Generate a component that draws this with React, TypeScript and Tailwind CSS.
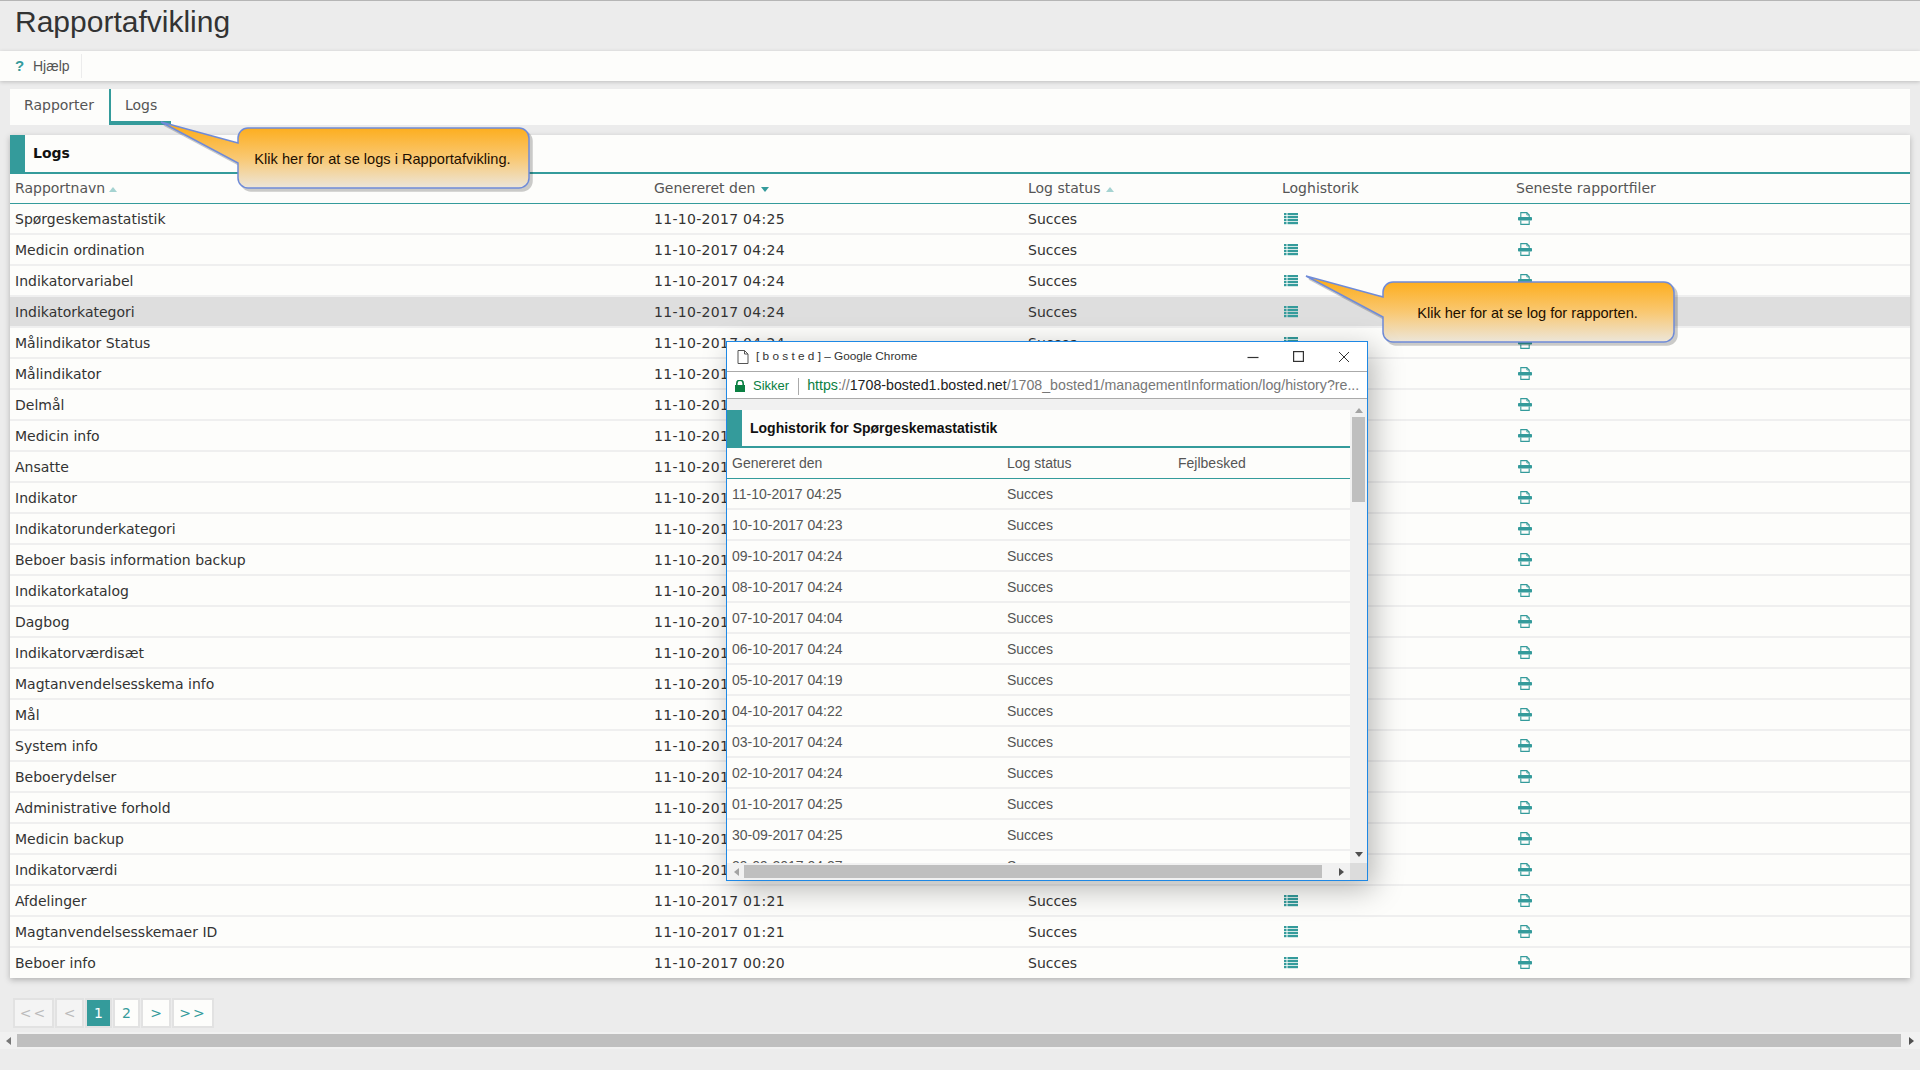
import React from 'react';

const reports: [string, string][] = [
  ['Spørgeskemastatistik', '11-10-2017 04:25'],
  ['Medicin ordination', '11-10-2017 04:24'],
  ['Indikatorvariabel', '11-10-2017 04:24'],
  ['Indikatorkategori', '11-10-2017 04:24'],
  ['Målindikator Status', '11-10-2017 04:24'],
  ['Målindikator', '11-10-2017 04:24'],
  ['Delmål', '11-10-2017 04:24'],
  ['Medicin info', '11-10-2017 04:24'],
  ['Ansatte', '11-10-2017 04:24'],
  ['Indikator', '11-10-2017 04:24'],
  ['Indikatorunderkategori', '11-10-2017 04:24'],
  ['Beboer basis information backup', '11-10-2017 04:24'],
  ['Indikatorkatalog', '11-10-2017 04:24'],
  ['Dagbog', '11-10-2017 04:24'],
  ['Indikatorværdisæt', '11-10-2017 04:24'],
  ['Magtanvendelsesskema info', '11-10-2017 04:24'],
  ['Mål', '11-10-2017 04:24'],
  ['System info', '11-10-2017 04:24'],
  ['Beboerydelser', '11-10-2017 04:24'],
  ['Administrative forhold', '11-10-2017 04:24'],
  ['Medicin backup', '11-10-2017 04:24'],
  ['Indikatorværdi', '11-10-2017 04:24'],
  ['Afdelinger', '11-10-2017 01:21'],
  ['Magtanvendelsesskemaer ID', '11-10-2017 01:21'],
  ['Beboer info', '11-10-2017 00:20'],
];

const history = [
  '11-10-2017 04:25',
  '10-10-2017 04:23',
  '09-10-2017 04:24',
  '08-10-2017 04:24',
  '07-10-2017 04:04',
  '06-10-2017 04:24',
  '05-10-2017 04:19',
  '04-10-2017 04:22',
  '03-10-2017 04:24',
  '02-10-2017 04:24',
  '01-10-2017 04:25',
  '30-09-2017 04:25',
  '29-09-2017 04:27',
];

const ListIcon = () => (
  <svg width="14" height="12" viewBox="0 0 14 12" fill="#349b9b" className="ml-[2px]">
    {[0, 3, 6, 9].map((y) => (
      <g key={y}>
        <rect x="0" y={y} width="2.5" height="2.2" />
        <rect x="3.5" y={y} width="10.5" height="2.2" />
      </g>
    ))}
  </svg>
);

const PrintIcon = () => (
  <svg width="14" height="13" viewBox="0 0 14 13" fill="none" stroke="#349b9b" strokeWidth="1.1" className="ml-[2px] -mt-[1px]">
    <path d="M2.8 5V0.6H8.8L11.2 3V5" />
    <path d="M8.8 0.6V3H11.2" strokeWidth="0.8" />
    <rect x="0" y="5" width="14" height="3.6" rx="0.8" fill="#349b9b" stroke="none" />
    <path d="M2.8 8.6V12.4H11.2V8.6" />
  </svg>
);

const SortArrow = ({ down, light, className }: { down?: boolean; light?: boolean; className: string }) => (
  <svg width="8" height="5" viewBox="0 0 8 5" className={`inline-block ${className}`} fill={light ? '#a5d3d1' : '#349b9b'}>
    <path d={down ? 'M0 0H8L4 5Z' : 'M0 5H8L4 0Z'} />
  </svg>
);

const Callout = ({ id, text, className }: { id: string; text: string; className: string }) => (
  <div className={`absolute w-[380px] h-[76px] ${className}`}>
    <svg width="380" height="76" viewBox="0 0 380 76" className="drop-shadow-[3px_3px_0_rgba(0,0,0,0.2)]">
      <defs>
        <linearGradient id={id} x1="0" y1="10" x2="0" y2="70" gradientUnits="userSpaceOnUse">
          <stop offset="0" stopColor="#fdae1f" />
          <stop offset="0.5" stopColor="#f9c872" />
          <stop offset="1" stopColor="#ece6da" />
        </linearGradient>
      </defs>
      <path
        d="M6 4L83 25V20a10 10 0 0 1 10-10H364a10 10 0 0 1 10 10V60a10 10 0 0 1-10 10H93a10 10 0 0 1-10-10V45Z"
        fill={`url(#${id})`}
        stroke="#6f8bd8"
        strokeWidth="1.5"
      />
    </svg>
    <div className="absolute left-[83px] top-[10px] w-[290px] h-[60px] flex items-center justify-center pt-[4px] pr-[1px] font-['Liberation_Sans',sans-serif] text-[14.6px] text-[#1d0f00]">
      {text}
    </div>
  </div>
);

const PopupWindow = () => (
  <div className="absolute left-[726px] top-[341px] w-[642px] h-[540px] flex flex-col bg-[#f1f1f1] border border-[#1e88e5] shadow-[6px_8px_28px_rgba(0,0,0,0.28)] font-['Liberation_Sans',sans-serif] text-[14px] text-[#555]">
    {/* chrome title bar */}
    <div className="h-[30px] shrink-0 flex items-center bg-white border-b border-[#aaa] pl-[10px] pr-[17px]">
      <svg width="12" height="14" viewBox="0 0 12 14" fill="none" stroke="#555" strokeWidth="1">
        <path d="M1 0.5H7.5L11 4V13.5H1ZM7.5 0.5V4H11" />
      </svg>
      <span className="ml-[7px] text-[11.8px] text-[#333]">[ b o s t e d ] – Google Chrome</span>
      <div className="ml-auto flex items-center gap-[34px]">
        <svg width="12" height="12" viewBox="0 0 12 12" stroke="#333" strokeWidth="1.2"><path d="M0.5 6.5H11.5" /></svg>
        <svg width="11" height="11" viewBox="0 0 11 11" fill="none" stroke="#333" strokeWidth="1.2"><rect x="0.6" y="0.6" width="9.8" height="9.8" /></svg>
        <svg width="12" height="12" viewBox="0 0 12 12" stroke="#333" strokeWidth="1"><path d="M1 1L11 11M11 1L1 11" /></svg>
      </div>
    </div>
    {/* address bar */}
    <div className="h-[27px] shrink-0 flex items-center bg-white border-b border-[#aaa] pl-[8px] pt-[2px] text-[14.2px] whitespace-nowrap overflow-hidden">
      <svg width="10" height="12" viewBox="0 0 10 12" fill="#0b8043">
        <path d="M1 5V3.5a4 4 0 0 1 8 0V5h1v7H0V5ZM2.6 5h4.8V3.5a2.4 2.4 0 0 0-4.8 0Z" />
      </svg>
      <span className="ml-[8px] text-[13px] text-[#0b8043]">Sikker</span>
      <span className="ml-[9px] w-px h-[17px] bg-[#aaa]" />
      <span className="ml-[8px] text-[#777]">
        <span className="text-[#0b8043]">https</span>://<span className="text-[#222]">1708-bosted1.bosted.net</span>/1708_bosted1/managementInformation/log/history?re...
      </span>
    </div>
    <div className="flex-1 min-h-0 flex flex-col">
      <div className="flex-1 min-h-0 flex">
        <div className="flex-1 min-w-0 overflow-hidden pt-[11px]">
          <div className="h-[36px] flex items-stretch bg-[#fdfdfb]">
            <div className="w-[15px] bg-[#349b9b]" />
            <div className="pl-[8px] flex items-center font-bold text-[14px] text-[#111]">
              Loghistorik for Spørgeskemastatistik
            </div>
          </div>
          <div className="h-[2px] bg-[#349b9b]" />
          <div className="bg-[#fdfdfb]">
            <div className="h-[31px] flex items-center border-b border-[#349b9b]">
              <div className="w-[280px] pl-[5px]">Genereret den</div>
              <div className="w-[171px]">Log status</div>
              <div>Fejlbesked</div>
            </div>
            {history.map((d) => (
              <div key={d} className="h-[31px] pt-[2px] flex items-center border-b-2 border-[#efefef]">
                <div className="w-[280px] pl-[5px]">{d}</div>
                <div className="w-[171px]">Succes</div>
              </div>
            ))}
          </div>
        </div>
        {/* vertical scrollbar */}
        <div className="w-[17px] shrink-0 bg-[#f1f1f1] flex flex-col items-center justify-between pt-[9px] pb-[6px]">
          <div className="w-full flex flex-col items-center">
            <svg width="8" height="5" viewBox="0 0 8 5" fill="#a3a3a3"><path d="M0 5H8L4 0Z" /></svg>
            <div className="mt-[4px] w-[13px] h-[85px] bg-[#bfbfbf]" />
          </div>
          <svg width="8" height="5" viewBox="0 0 8 5" fill="#505050"><path d="M0 0H8L4 5Z" /></svg>
        </div>
      </div>
      {/* horizontal scrollbar */}
      <div className="h-[17px] shrink-0 flex">
        <div className="flex-1 flex items-center bg-[#f1f1f1] pl-[7px] pr-[5px]">
          <svg width="5" height="8" viewBox="0 0 5 8" fill="#a3a3a3"><path d="M5 0V8L0 4Z" /></svg>
          <div className="ml-[5px] w-[578px] h-[13px] bg-[#bfbfbf]" />
          <svg width="5" height="8" viewBox="0 0 5 8" fill="#505050" className="ml-auto mr-[1px]"><path d="M0 0V8L5 4Z" /></svg>
        </div>
        <div className="w-[17px] bg-[#dcdcdc]" />
      </div>
    </div>
  </div>
);

export default function App() {
  return (
    <div className="relative w-[1920px] h-[1070px] overflow-hidden bg-[#ececec] font-['DejaVu_Sans',sans-serif] text-[14px] text-[#333]">
      <div className="h-[51px] border-t border-[#b5b5b5] pl-[15px] pt-[2px] font-['Liberation_Sans',sans-serif] text-[30px] leading-[38px] text-[#333]">
        Rapportafvikling
      </div>
      <div className="h-[30px] bg-[#fdfdfb] shadow-[0_1px_4px_rgba(0,0,0,0.2)] flex items-center font-['Liberation_Sans',sans-serif] text-[#555]">
        <span className="w-[18px] ml-[15px] font-bold text-[15px] text-[#349b9b]">?</span>
        <span>Hjælp</span>
        <span className="ml-[11px] w-px h-[24px] bg-[#ececec]" />
      </div>

      {/* tabs */}
      <div className="mx-[10px] mt-[8px] h-[36px] flex bg-[#fdfdfb] text-[#555]">
        <div className="w-[99px] pl-[14px] pt-[6px]">Rapporter</div>
        <div className="w-[62px] border-l-[2px] border-b-[4px] border-[#349b9b] pl-[14px] pt-[6px]">Logs</div>
      </div>

      {/* table card */}
      <div className="mx-[10px] mt-[10px] bg-[#fdfdfb] shadow-[0_2px_6px_rgba(0,0,0,0.25)]">
        <div className="h-[37px] flex items-stretch">
          <div className="w-[15px] bg-[#349b9b]" />
          <div className="pl-[8px] flex items-center font-bold text-[#111]">Logs</div>
        </div>
        <div className="h-[2px] bg-[#349b9b]" />
        <div className="h-[30px] flex items-center border-b border-[#349b9b] text-[#555]">
          <div className="w-[644px] pl-[5px]">Rapportnavn<SortArrow light className="ml-[4px]" /></div>
          <div className="w-[374px]">Genereret den<SortArrow down className="ml-[6px]" /></div>
          <div className="w-[254px]">Log status<SortArrow light className="ml-[6px]" /></div>
          <div className="w-[234px]">Loghistorik</div>
          <div>Seneste rapportfiler</div>
        </div>
        {reports.map(([name, date], i) => (
          <div
            key={name}
            className={`h-[31px] last:h-[30px] pt-[1px] last:pt-0 flex items-center border-b-2 last:border-b-0 border-[#efefef] ${i === 3 ? 'bg-[#dedede]' : ''}`}
          >
            <div className="w-[644px] pl-[5px]">{name}</div>
            <div className="w-[374px] tracking-[0.3px]">{date}</div>
            <div className="w-[254px]">Succes</div>
            <div className="w-[234px]"><ListIcon /></div>
            <div><PrintIcon /></div>
          </div>
        ))}
      </div>

      {/* pager */}
      <div className="mt-[20px] ml-[13px] h-[30px] flex gap-[1px] text-[14px]">
        <div className="w-[41px] flex items-center justify-center border-2 border-[#e2e2e2] bg-[#f4f4f4] text-[#bbb] tracking-[2px]">&lt;&lt;</div>
        <div className="w-[29px] flex items-center justify-center border-2 border-[#e2e2e2] bg-[#f4f4f4] text-[#bbb]">&lt;</div>
        <div className="w-[27px] flex items-center justify-center border-2 border-[#e2e2e2] bg-[#349b9b] text-white">1</div>
        <div className="w-[27px] flex items-center justify-center border-2 border-[#e2e2e2] bg-[#fdfdfb] text-[#349b9b]">2</div>
        <div className="w-[30px] flex items-center justify-center border-2 border-[#e2e2e2] bg-[#fdfdfb] text-[#349b9b]">&gt;</div>
        <div className="w-[42px] flex items-center justify-center border-2 border-[#e2e2e2] bg-[#fdfdfb] text-[#349b9b] tracking-[2px]">&gt;&gt;</div>
      </div>

      {/* page scrollbar */}
      <div className="mt-[4px] h-[17px] bg-[#f1f1f1] flex items-center pl-[6px] pr-[6px]">
        <svg width="5" height="8" viewBox="0 0 5 8" fill="#777"><path d="M5 0V8L0 4Z" /></svg>
        <div className="ml-[6px] mr-[2px] flex-1 h-[13px] bg-[#bfbfbf]" />
        <svg width="5" height="8" viewBox="0 0 5 8" fill="#505050" className="ml-[6px]"><path d="M0 0V8L5 4Z" /></svg>
      </div>

      <Callout id="callout-logs" text="Klik her for at se logs i Rapportafvikling." className="left-[155px] top-[118px]" />
      <Callout id="callout-log" text="Klik her for at se log for rapporten." className="left-[1300px] top-[272px]" />
      <PopupWindow />
    </div>
  );
}
